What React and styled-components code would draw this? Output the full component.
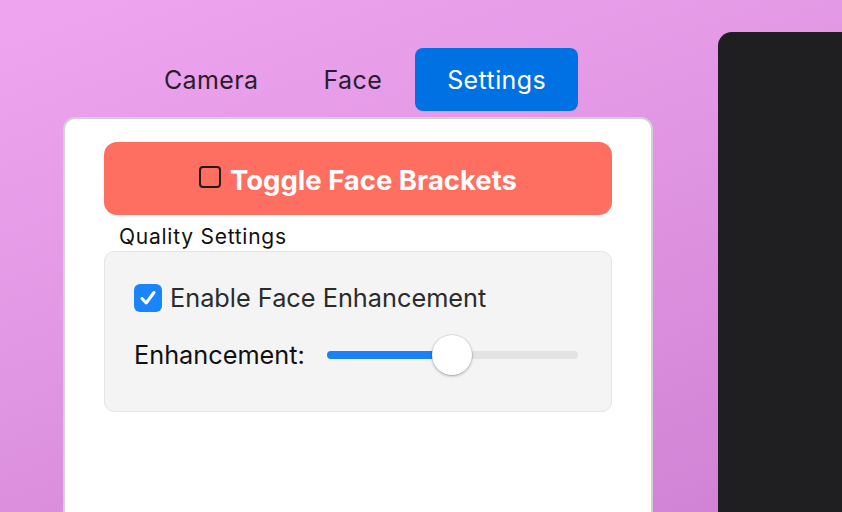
import React, { useState } from "react";
import styled, { createGlobalStyle } from "styled-components";

const GlobalStyle = createGlobalStyle`
  html, body { margin: 0; padding: 0; }
  body { font-family: Inter, "Noto Sans", sans-serif; }
`;

const Page = styled.div`
  width: 842px;
  height: 512px;
  overflow: hidden;
  box-sizing: border-box;
  padding: 32px 0 0 63px;
  display: flex;
  align-items: flex-start;
  gap: 65px;
  background: linear-gradient(160deg, #f0a5f1 0%, #e197e3 45%, #cf80d3 100%);
`;

const LeftColumn = styled.div`
  width: 590px;
  flex-shrink: 0;
  padding-top: 16px;
  display: flex;
  flex-direction: column;
  gap: 6px;
`;

const Tabs = styled.div`
  display: flex;
  justify-content: center;
  gap: 1px;
  padding-right: 6px;
`;

const Tab = styled.button`
  height: 63px;
  padding: 0 32px;
  border: none;
  border-radius: 8px;
  font-family: inherit;
  font-size: 25px;
  letter-spacing: 0.4px;
  font-weight: 400;
  cursor: pointer;
  background: ${(p) => (p.$active ? "#0071e3" : "transparent")};
  color: ${(p) => (p.$active ? "#ffffff" : "#2a1d2b")};
`;

const Panel = styled.div`
  height: 420px;
  box-sizing: border-box;
  background: #ffffff;
  border: 2px solid #d3d0d4;
  border-radius: 12px;
  padding: 23px 39px;
  display: flex;
  flex-direction: column;
`;

const ToggleButton = styled.button`
  height: 73px;
  border: none;
  border-radius: 13px;
  background: #ff6f61;
  color: #ffffff;
  font-family: inherit;
  font-size: 27.5px;
  font-weight: 700;
  display: flex;
  align-items: center;
  justify-content: center;
  gap: 9px;
  padding-top: 3px;
  cursor: pointer;
`;

const SquareGlyph = styled.span`
  width: 18px;
  height: 18px;
  border: 2px solid #231a1a;
  border-radius: 4px;
  box-sizing: content-box;
  margin-top: -6px;
`;

const SectionLabel = styled.div`
  font-size: 21px;
  letter-spacing: 0.75px;
  color: #111111;
  padding: 9px 0 0 15px;
  line-height: 26px;
`;

const SettingsBox = styled.div`
  margin-top: 1px;
  height: 161px;
  box-sizing: border-box;
  background: #f4f4f4;
  border: 1px solid #e4e4e4;
  border-radius: 10px;
  padding: 30px 33px 0 29px;
  display: flex;
  flex-direction: column;
  gap: 26px;
`;

const CheckRow = styled.label`
  display: flex;
  align-items: center;
  gap: 8px;
  font-size: 25.3px;
  color: #2b2b2b;
  cursor: pointer;
`;

const CheckBox = styled.span`
  width: 28px;
  height: 28px;
  border-radius: 6px;
  background: ${(p) => (p.$checked ? "#1a84fb" : "#ffffff")};
  display: flex;
  align-items: center;
  justify-content: center;
  flex-shrink: 0;
`;

const SliderRow = styled.div`
  display: flex;
  align-items: center;
  gap: 22px;
  font-size: 25.3px;
  color: #111111;
`;

const Track = styled.div`
  position: relative;
  flex: 1;
  height: 8px;
  border-radius: 4px;
  background: #e3e3e3;
`;

const Fill = styled.div`
  height: 100%;
  border-radius: 4px;
  background: #1a80f8;
`;

const Thumb = styled.div`
  position: absolute;
  top: 50%;
  width: 40px;
  height: 40px;
  border-radius: 50%;
  background: #ffffff;
  box-shadow: 0 1px 3px rgba(0, 0, 0, 0.3), 0 0 0 0.5px rgba(0, 0, 0, 0.12);
  transform: translate(-50%, -50%);
`;

const Preview = styled.div`
  width: 400px;
  height: 520px;
  flex-shrink: 0;
  background: #1f1f21;
  border-radius: 14px;
`;

export default function App() {
  const [tab, setTab] = useState("Settings");
  const [enabled, setEnabled] = useState(true);
  const value = 50;
  return (
    <>
      <GlobalStyle />
      <Page>
        <LeftColumn>
          <Tabs>
            {["Camera", "Face", "Settings"].map((t) => (
              <Tab key={t} $active={tab === t} onClick={() => setTab(t)}>
                {t}
              </Tab>
            ))}
          </Tabs>
          <Panel>
            <ToggleButton>
              <SquareGlyph />
              Toggle Face Brackets
            </ToggleButton>
            <SectionLabel>Quality Settings</SectionLabel>
            <SettingsBox>
              <CheckRow onClick={() => setEnabled(!enabled)}>
                <CheckBox $checked={enabled}>
                  {enabled && (
                    <svg width="20" height="20" viewBox="0 0 20 20">
                      <path
                        d="M4 10.5 L8.2 15 L16 4.5"
                        fill="none"
                        stroke="#ffffff"
                        strokeWidth="3"
                        strokeLinecap="round"
                        strokeLinejoin="round"
                      />
                    </svg>
                  )}
                </CheckBox>
                Enable Face Enhancement
              </CheckRow>
              <SliderRow>
                Enhancement:
                <Track>
                  <Fill style={{ width: `${value}%` }} />
                  <Thumb style={{ left: `${value}%` }} />
                </Track>
              </SliderRow>
            </SettingsBox>
          </Panel>
        </LeftColumn>
        <Preview />
      </Page>
    </>
  );
}
